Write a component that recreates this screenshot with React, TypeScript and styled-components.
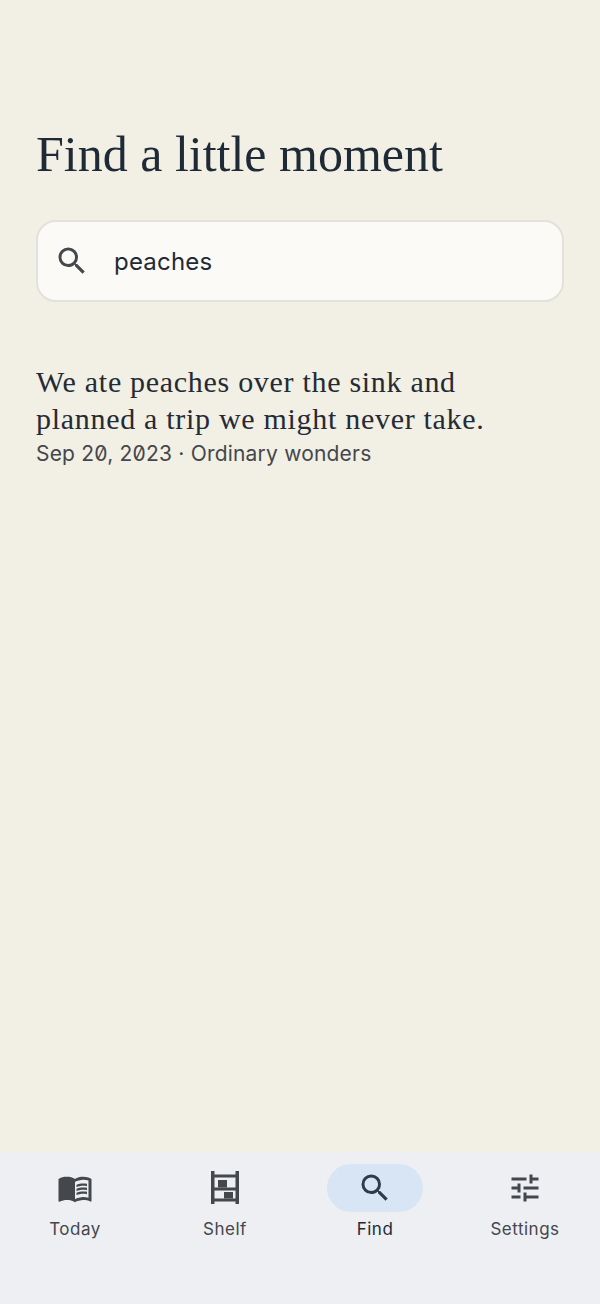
import React from 'react';
import styled, { createGlobalStyle } from 'styled-components';

const GlobalStyle = createGlobalStyle`
	html, body {
		margin: 0;
		padding: 0;
		background-color: #f2efe4;
	}
`;

const Screen = styled.div`
	width: 600px;
	height: 1304px;
	display: flex;
	flex-direction: column;
	background-color: #f2efe4;
`;

const Main = styled.main`
	flex: 1;
	padding: 126px 36px 0;
`;

const Title = styled.h1`
	margin: 0;
	font-family: 'Liberation Serif', serif;
	font-weight: 400;
	font-size: 50px;
	line-height: 56px;
	color: #1f2a37;
`;

const SearchBox = styled.div`
	display: flex;
	align-items: center;
	gap: 24px;
	height: 82px;
	box-sizing: border-box;
	margin-top: 38px;
	padding: 0 16px;
	background-color: #fbfaf6;
	border: 2px solid #e2e1dc;
	border-radius: 20px;
	svg {
		fill: #44474c;
	}
`;

const Query = styled.span`
	font-family: Inter, sans-serif;
	font-size: 24px;
	letter-spacing: 0.2px;
	color: #1f2a37;
`;

const Result = styled.article`
	margin-top: 61px;
`;

const Excerpt = styled.p`
	margin: 0;
	font-family: 'Liberation Serif', serif;
	font-size: 30px;
	line-height: 37px;
	letter-spacing: 0.7px;
	color: #252b36;
`;

const Meta = styled.div`
	margin-top: 1px;
	font-family: Inter, sans-serif;
	font-size: 21px;
	line-height: 32px;
	letter-spacing: 0.2px;
	font-variant-numeric: slashed-zero;
	color: #44474c;
`;

const NavBar = styled.nav`
	height: 152px;
	display: grid;
	grid-template-columns: repeat(4, 1fr);
	background-color: #edeff3;
`;

const NavItem = styled.div`
	display: flex;
	flex-direction: column;
	align-items: center;
	padding-top: 12px;
`;

const NavIcon = styled.div<{ $active?: boolean }>`
	width: 96px;
	height: 48px;
	display: flex;
	align-items: center;
	justify-content: center;
	border-radius: 24px;
	background-color: ${p => (p.$active ? '#d8e5f5' : 'transparent')};
	svg {
		fill: ${p => (p.$active ? '#2f3b4a' : '#44474c')};
	}
`;

const NavLabel = styled.span<{ $active?: boolean }>`
	margin-top: 5px;
	font-family: Inter, sans-serif;
	font-size: 17px;
	line-height: 24px;
	letter-spacing: 0.5px;
	color: ${p => (p.$active ? '#1f2a37' : '#44474c')};
`;

const SearchIcon = () => (
	<svg width="36" height="36" viewBox="0 0 24 24">
		<path d="M15.5 14h-.79l-.28-.27A6.47 6.47 0 0 0 16 9.5 6.5 6.5 0 1 0 9.5 16c1.61 0 3.09-.59 4.23-1.57l.27.28v.79l5 4.99L20.49 19l-4.99-5zm-6 0C7.01 14 5 11.99 5 9.5S7.01 5 9.5 5 14 7.01 14 9.5 11.99 14 9.5 14z" />
	</svg>
);

const BookIcon = () => (
	<svg width="36" height="36" viewBox="0 0 24 24">
		<path d="M21 5c-1.11-.35-2.33-.5-3.5-.5-1.95 0-4.05.4-5.5 1.5-1.45-1.1-3.55-1.5-5.5-1.5S2.45 4.9 1 6v14.65c0 .25.25.5.5.5.1 0 .15-.05.25-.05C3.1 20.45 5.05 20 6.5 20c1.95 0 4.05.4 5.5 1.5 1.35-.85 3.8-1.5 5.5-1.5 1.65 0 3.35.3 4.75 1.05.1.05.15.05.25.05.25 0 .5-.25.5-.5V6c-.6-.45-1.25-.75-2-1zm0 13.5c-1.1-.35-2.3-.5-3.5-.5-1.7 0-4.15.65-5.5 1.5V8c1.35-.85 3.8-1.5 5.5-1.5 1.2 0 2.4.15 3.5.5v11.5z" />
		<path d="M17.5 10.5c.88 0 1.73.09 2.5.26V9.24c-.79-.15-1.64-.24-2.5-.24-1.7 0-3.24.29-4.5.83v1.66c1.13-.64 2.7-.99 4.5-.99zM13 12.49v1.66c1.13-.64 2.7-.99 4.5-.99.88 0 1.73.09 2.5.26V11.9c-.79-.15-1.64-.24-2.5-.24-1.7 0-3.24.3-4.5.83zM17.5 14.33c-1.7 0-3.24.29-4.5.83v1.66c1.13-.64 2.7-.99 4.5-.99.88 0 1.73.09 2.5.26v-1.52c-.79-.16-1.64-.24-2.5-.24z" />
	</svg>
);

const ShelfIcon = () => (
	<svg width="36" height="36" viewBox="0 0 36 36">
		<path d="M4 1h3.500v3.500h21V1H32v33h-3.500v-2.500h-21V34H4V1zm3.500 6.500v10h21v-10h-21zm0 13v8h21v-8h-21z" />
		<path d="M11 10h9v7.500h-9zM17 22h9v6.500h-9z" />
	</svg>
);

const TuneIcon = () => (
	<svg width="36" height="36" viewBox="0 0 24 24">
		<path d="M3 17v2h6v-2H3zM3 5v2h10V5H3zm10 16v-2h8v-2h-8v-2h-2v6h2zM7 9v2H3v2h4v2h2V9H7zm14 4v-2H11v2h10zm-6-4h2V7h4V5h-4V3h-2v6z" />
	</svg>
);

export default function App() {
	return (
		<>
			<GlobalStyle />
			<Screen>
				<Main>
					<Title>Find a little moment</Title>
					<SearchBox>
						<SearchIcon />
						<Query>peaches</Query>
					</SearchBox>
					<Result>
						<Excerpt>
							We ate peaches over the sink and
							<br />
							planned a trip we might never take.
						</Excerpt>
						<Meta>Sep 20, 2023 · Ordinary wonders</Meta>
					</Result>
				</Main>
				<NavBar>
					<NavItem>
						<NavIcon>
							<BookIcon />
						</NavIcon>
						<NavLabel>Today</NavLabel>
					</NavItem>
					<NavItem>
						<NavIcon>
							<ShelfIcon />
						</NavIcon>
						<NavLabel>Shelf</NavLabel>
					</NavItem>
					<NavItem>
						<NavIcon $active>
							<SearchIcon />
						</NavIcon>
						<NavLabel $active>Find</NavLabel>
					</NavItem>
					<NavItem>
						<NavIcon>
							<TuneIcon />
						</NavIcon>
						<NavLabel>Settings</NavLabel>
					</NavItem>
				</NavBar>
			</Screen>
		</>
	);
}
